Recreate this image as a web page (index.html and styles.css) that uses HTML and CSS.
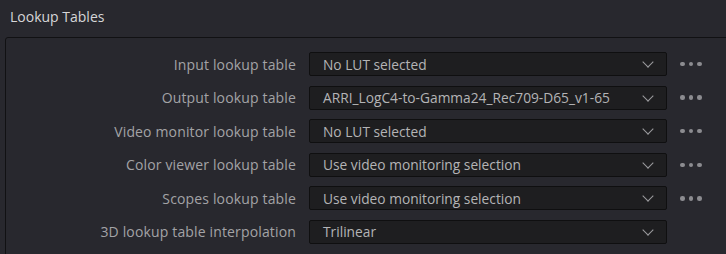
FILE: index.html
```html
<!DOCTYPE html>
<html lang="en">
  <head>
    <meta charset="UTF-8" />
    <meta name="viewport" content="width=device-width, initial-scale=1.0" />
    <title>Lookup Tables</title>
    <link rel="stylesheet" href="styles.css">
  </head>
  <body>
    <p class="section_title">Lookup Tables</p>
    <div class="panel">
      <div class="grid">
        <span class="label">Input lookup table</span>
        <div class="select"><span>No LUT selected</span><i class="chevron"></i></div>
        <span class="more"><b></b><b></b><b></b></span>

        <span class="label">Output lookup table</span>
        <div class="select"><span>ARRI_LogC4-to-Gamma24_Rec709-D65_v1-65</span><i class="chevron"></i></div>
        <span class="more"><b></b><b></b><b></b></span>

        <span class="label">Video monitor lookup table</span>
        <div class="select"><span>No LUT selected</span><i class="chevron"></i></div>
        <span class="more"><b></b><b></b><b></b></span>

        <span class="label">Color viewer lookup table</span>
        <div class="select"><span>Use video monitoring selection</span><i class="chevron"></i></div>
        <span class="more"><b></b><b></b><b></b></span>

        <span class="label">Scopes lookup table</span>
        <div class="select"><span>Use video monitoring selection</span><i class="chevron"></i></div>
        <span class="more"><b></b><b></b><b></b></span>

        <span class="label">3D lookup table interpolation</span>
        <div class="select"><span>Trilinear</span><i class="chevron"></i></div>
        <span></span>
      </div>
    </div>
  </body>
</html>
```

FILE: styles.css
```css
* {
  margin: 0;
  padding: 0;
  box-sizing: border-box;
}

html,
body {
  height: 254px;
  overflow: hidden;
}

body {
  background-color: #28282e;
  font-family: "Open Sans", "Noto Sans", sans-serif;
  font-size: 14px;
  color: #a3a3a6;
}

.section_title {
  padding: 7px 10px 0;
  height: 37px;
  color: #d6d6d8;
}

.panel {
  margin-left: 5px;
  margin-right: -20px;
  border: 1px solid #111113;
  border-radius: 3px;
  padding: 14px 0 30px;
}

.grid {
  display: grid;
  grid-template-columns: 290px 358px 60px;
  column-gap: 13px;
  row-gap: 9.6px;
  align-items: center;
}

.label {
  text-align: right;
  white-space: nowrap;
  letter-spacing: 0.15px;
}

.select {
  display: flex;
  align-items: center;
  justify-content: space-between;
  height: 24px;
  padding: 0 14px 0 13px;
  background-color: #1e1e20;
  border: 1px solid #0f0f10;
  border-radius: 2px;
  color: #b4b4b6;
  font-size: 13.75px;
  white-space: nowrap;
}

.chevron {
  width: 8px;
  height: 8px;
  border-right: 1.6px solid #9c9c9e;
  border-bottom: 1.6px solid #9c9c9e;
  transform: rotate(45deg);
  margin-top: -4px;
}

.more {
  display: flex;
  gap: 4px;
}

.more b {
  width: 4.5px;
  height: 4.5px;
  border-radius: 50%;
  background-color: #8c8c90;
}
```
